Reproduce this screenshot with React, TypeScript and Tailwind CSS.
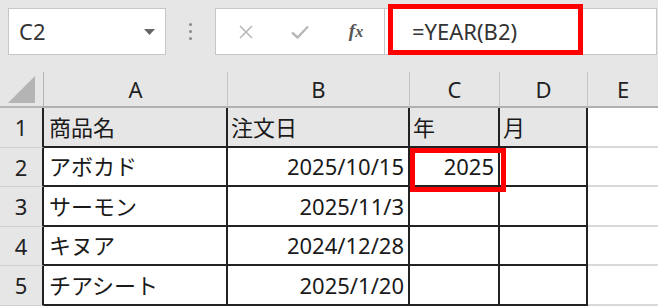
import React from "react";

const FONT = '"Noto Sans", "Noto Sans CJK JP", sans-serif';

const colLetters = ["A", "B", "C", "D", "E"];

const data: { name: string; date: string; year: string; month: string }[] = [
  { name: "商品名", date: "注文日", year: "年", month: "月" },
  { name: "アボカド", date: "2025/10/15", year: "2025", month: "" },
  { name: "サーモン", date: "2025/11/3", year: "", month: "" },
  { name: "キヌア", date: "2024/12/28", year: "", month: "" },
  { name: "チアシート", date: "2025/1/20", year: "", month: "" },
];

function Toolbar() {
  return (
    <div className="flex h-[72px] items-start pl-2 pt-2">
      {/* name box */}
      <div className="flex h-[47px] w-[158px] items-center justify-between border border-[#c6c6c6] bg-white pl-[10px] pr-[10px]">
        <span className="text-[22px] text-[#333]">C2</span>
        <svg width="11" height="6" viewBox="0 0 11 6">
          <path d="M0 0 L11 0 L5.5 6 Z" fill="#666" />
        </svg>
      </div>

      {/* grip dots */}
      <div className="flex h-[47px] w-[49px] flex-col items-center justify-center gap-[4px]">
        <span className="h-[3px] w-[3px] rounded-full bg-[#8a8a8a]" />
        <span className="h-[3px] w-[3px] rounded-full bg-[#8a8a8a]" />
        <span className="h-[3px] w-[3px] rounded-full bg-[#8a8a8a]" />
      </div>

      {/* cancel / enter / fx */}
      <div className="flex h-[47px] w-[170px] items-center border border-[#c6c6c6] bg-white">
        <div className="flex w-[56px] justify-center pl-[4px]">
          <svg width="14" height="14" viewBox="0 0 14 14">
            <path d="M1 1 L13 13 M13 1 L1 13" stroke="#b8b8b8" strokeWidth="1.6" />
          </svg>
        </div>
        <div className="flex w-[56px] justify-center">
          <svg width="18" height="14" viewBox="0 0 18 14">
            <path d="M1 7.5 L6.5 12.5 L17 1.5" stroke="#b8b8b8" strokeWidth="2.4" fill="none" />
          </svg>
        </div>
        <div className="flex w-[56px] justify-center">
          <span
            className="text-[19px] font-bold italic text-[#555]"
            style={{ fontFamily: '"Liberation Serif", serif' }}
          >
            f<span className="text-[16px]">x</span>
          </span>
        </div>
      </div>

      {/* formula input */}
      <div className="relative flex h-[47px] w-[272px] items-center border-y border-r border-[#c6c6c6] bg-white pl-[27px]">
        <span className="text-[22px] text-[#333]">=YEAR(B2)</span>
        <div className="absolute left-[3px] top-[-5px] h-[51px] w-[195px] border-[5px] border-[#ff0000]" />
      </div>
    </div>
  );
}

function Sheet() {
  return (
    <div className="relative grid grid-cols-[44px_184px_182px_90px_88px_70px] grid-rows-[36px_40px_39px_40px_39px_40px] text-[22px] text-[#1a1a1a]">
      {/* corner */}
      <div className="flex items-end justify-center border-b-2 border-r border-[#b5b5b5] bg-[#e6e6e6] pb-[3px]">
        <svg width="27" height="27" viewBox="0 0 27 27">
          <path d="M0 27 L27 0 L27 27 Z" fill="#b4b4b4" />
        </svg>
      </div>
      {colLetters.map((c, i) => (
        <div
          key={c}
          className={
            "flex items-center justify-center border-b-2 border-[#b0b0b0] bg-[#e6e6e6] text-[#222] " +
            (i < 4 ? "border-r border-r-[#c4c4c4]" : "")
          }
        >
          {c}
        </div>
      ))}

      {data.map((r, ri) => {
        const fill = ri === 0 ? "bg-[#e7e6e6]" : "bg-white";
        const isHead = ri === 0;
        return (
          <React.Fragment key={ri}>
            <div className="flex items-center justify-center border-b border-r-2 border-b-[#cfcfcf] border-r-[#222] bg-[#e6e6e6] text-[#222]">
              {ri + 1}
            </div>
            <div className={"flex items-center border-b-2 border-r-2 border-[#222] pl-[5px] " + fill}>
              {r.name}
            </div>
            <div
              className={
                "flex items-center border-b-2 border-r-2 border-[#222] " +
                (isHead ? "pl-[3px] " : "justify-end pr-[4px] ") +
                fill
              }
            >
              {r.date}
            </div>
            <div
              className={
                "flex items-center border-b-2 border-r-2 border-[#222] " +
                (isHead ? "pl-[3px] " : "justify-end pr-[4px] ") +
                fill
              }
            >
              {r.year}
            </div>
            <div className={"flex items-center border-b-2 border-r-2 border-[#222] pl-[3px] " + fill}>
              {r.month}
            </div>
            <div className="border-b-2 border-[#d9d9d9] bg-white" />
          </React.Fragment>
        );
      })}

      {/* active-cell highlight on C2 */}
      <div className="absolute left-[410px] top-[76px] h-[44px] w-[96px] border-[5px] border-[#ff0000]" />
    </div>
  );
}

export default function App() {
  return (
    <div className="h-[306px] w-[658px] overflow-hidden bg-[#e6e6e6]" style={{ fontFamily: FONT }}>
      <Toolbar />
      <Sheet />
    </div>
  );
}
